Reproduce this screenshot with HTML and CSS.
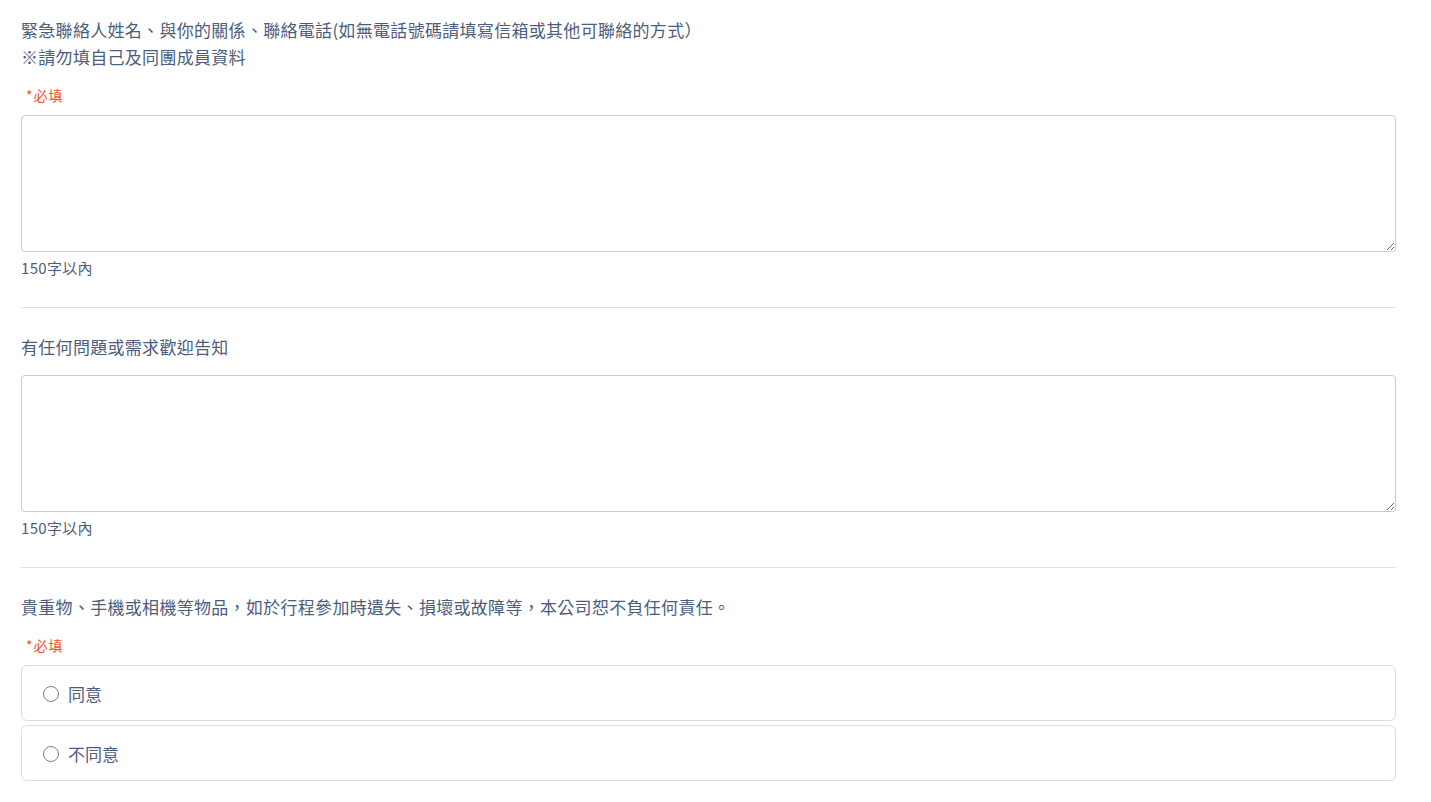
FILE: index.html
```html
<!DOCTYPE html>
<html>
<head>
  <meta charset="utf-8">
  <link rel="stylesheet" href="styles.css">
</head>
<body>
  <div class="form">
    <div class="field">
      <div class="title">緊急聯絡人姓名、與你的關係、聯絡電話(如無電話號碼請填寫信箱或其他可聯絡的方式）<br>※請勿填自己及同團成員資料</div>
      <div class="required">*必填</div>
      <textarea class="box"></textarea>
      <div class="hint">150字以內</div>
    </div>

    <div class="field">
      <div class="title">有任何問題或需求歡迎告知</div>
      <textarea class="box"></textarea>
      <div class="hint">150字以內</div>
    </div>

    <div class="field last">
      <div class="title">貴重物、手機或相機等物品，如於行程參加時遺失、損壞或故障等，本公司恕不負任何責任。</div>
      <div class="required">*必填</div>
      <label class="option"><span class="radio"></span>同意</label>
      <label class="option"><span class="radio"></span>不同意</label>
    </div>
  </div>
</body>
</html>
```

FILE: styles.css
```css
* {
  margin: 0;
  padding: 0;
  box-sizing: border-box;
}

body {
  background: #fff;
  font-family: "Noto Sans CJK TC", "Noto Sans", sans-serif;
  color: #4d5d7c;
}

.form {
  width: 1375px;
  margin-left: 21px;
  padding-top: 16px;
}

.field {
  border-bottom: 1px solid #e2e2e2;
  padding-bottom: 29px;
  margin-bottom: 25px;
}

.field.last {
  border-bottom: none;
}

.title {
  font-size: 17px;
  line-height: 27px;
  letter-spacing: 0.3px;
  margin-bottom: 15px;
}

.required {
  font-size: 14px;
  line-height: 20px;
  letter-spacing: 1px;
  color: #f0522e;
  padding-left: 5px;
  margin-bottom: 10px;
}

.box {
  display: block;
  width: 100%;
  height: 137px;
  border: 1px solid #ccc;
  border-radius: 4px;
  resize: vertical;
  font-family: inherit;
  outline: none;
}

.hint {
  font-size: 15px;
  line-height: 20px;
  letter-spacing: 0.3px;
  margin-top: 6px;
}

.option {
  display: flex;
  align-items: center;
  height: 56px;
  border: 1px solid #ddd;
  border-radius: 6px;
  padding-left: 21px;
  margin-bottom: 4px;
  font-size: 17px;
  color: #4d5d7c;
}

.radio {
  width: 16px;
  height: 16px;
  border: 1px solid #808080;
  border-radius: 50%;
  margin-right: 9px;
  margin-top: 2px;
}
```
